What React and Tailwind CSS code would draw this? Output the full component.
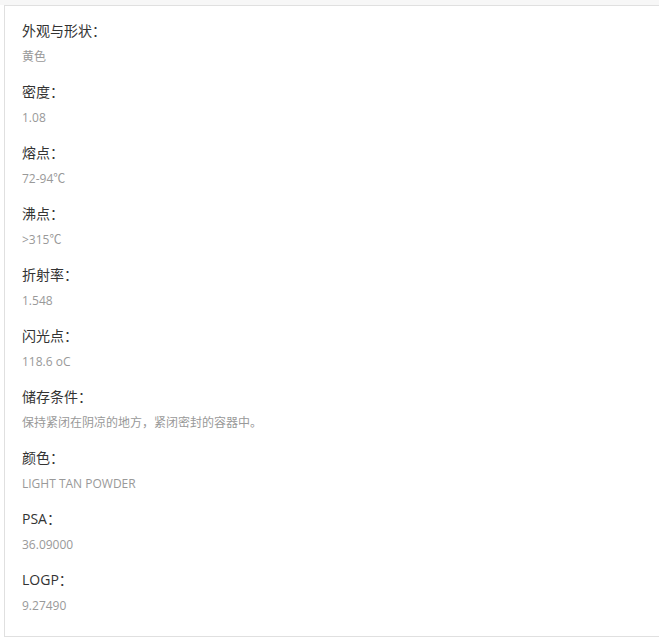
const items = [
  { label: '外观与形状：', value: '黄色' },
  { label: '密度：', value: '1.08' },
  { label: '熔点：', value: '72-94℃' },
  { label: '沸点：', value: '>315℃' },
  { label: '折射率：', value: '1.548' },
  { label: '闪光点：', value: '118.6 oC' },
  { label: '储存条件：', value: '保持紧闭在阴凉的地方，紧闭密封的容器中。' },
  { label: '颜色：', value: 'LIGHT TAN POWDER' },
  { label: 'PSA：', value: '36.09000' },
  { label: 'LOGP：', value: '9.27490' },
];

export default function App() {
  return (
    <div className="w-[659px] h-[640px] overflow-hidden bg-white font-['Open_Sans','Noto_Sans_CJK_SC',sans-serif]">
      <div className="h-[5px] bg-[#f7f7f7]" />
      <div className="ml-[4px] w-[700px] border border-[#e0e0e0] pl-[17px] pt-[13px] pb-[7px]">
        {items.map((item) => (
          <div key={item.label} className="mb-[11px]">
            <div className="h-[24px] leading-[24px] text-[14px] text-[#333]">{item.label}</div>
            <div className="mt-[2px] h-[24px] leading-[24px] text-[12px] text-[#999]">{item.value}</div>
          </div>
        ))}
      </div>
    </div>
  );
}
